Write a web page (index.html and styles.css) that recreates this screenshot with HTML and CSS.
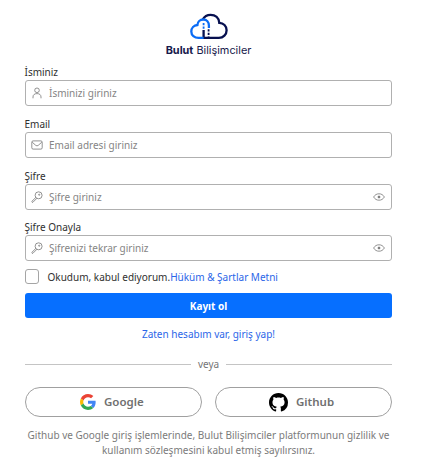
FILE: index.html
```html
<!DOCTYPE html>
<html lang="tr">
<head>
<meta charset="utf-8">
<title>Kayıt ol</title>
<link rel="stylesheet" href="styles.css">
</head>
<body>
<svg class="sprites" aria-hidden="true">
  <symbol id="key" viewBox="0 0 12 12"><circle cx="7.600" cy="4.300" r="3.500"/><circle cx="8.200" cy="3.700" r=".6"/><path d="M4.900 6.400 1 10.200a.7.700 0 0 0 1 1l3.900-3.900"/></symbol>
  <symbol id="eye" viewBox="0 0 12 8"><path d="M.6 4C2 1.800 3.700.8 6 .8s4 1 5.400 3.200C10 6.200 8.300 7.200 6 7.200S2 6.200.6 4z"/><circle cx="6" cy="4" r="1" class="pupil"/></symbol>
</svg>
<main class="page">
  <header class="brand">
    <svg class="brand-mark" viewBox="0 0 38 27">
      <g fill="none" stroke-width="2.300">
        <path stroke="#07104f" d="M12.700 6.500C14.400 3.400 17.200 1.800 20.600 1.800c4.800 0 8.300 3.100 8.700 8 4.200.1 7.300 3.300 7.300 7.400 0 4.300-3.300 7.700-7.700 7.700H13.600V17"/>
        <path stroke="#0b6cf5" d="M13.600 24.900H8.500c-4.100 0-7.200-2.700-7.200-6.400 0-3.700 2.700-6.300 6.100-6.500.2-3.300 2.700-5.500 5.900-5.500 3.400 0 5.600 2.500 5.600 6.100v2.400"/>
        <path stroke="#0b6cf5" stroke-width="1.800" stroke-dasharray="2.200 1.300" d="M13.600 10v6"/>
        <path stroke="#07104f" stroke-width="1.800" stroke-dasharray="2.200 1.300" d="M18.600 16.300v7.500"/>
      </g>
    </svg>
    <div class="brand-name"><b>Bulut</b> Bilişimciler</div>
  </header>
  <form class="form">
    <div class="field">
      <label for="name">İsminiz</label>
      <div class="control">
        <svg class="icon" viewBox="0 0 12 12"><circle cx="6" cy="3.300" r="2.300"/><path d="M2 11.300V10c0-2.200 1.500-3.400 4-3.400S10 7.800 10 10v1.300"/></svg>
        <input id="name" type="text" placeholder="İsminizi giriniz">
      </div>
    </div>
    <div class="field">
      <label for="email">Email</label>
      <div class="control">
        <svg class="icon" viewBox="0 0 12 12"><rect x=".8" y="1.900" width="10.400" height="8.200" rx="1.300"/><path d="m1.200 3.200 3.600 3.200q1.200.9 2.400 0l3.600-3.200"/></svg>
        <input id="email" type="text" placeholder="Email adresi giriniz">
      </div>
    </div>
    <div class="field">
      <label for="pass">Şifre</label>
      <div class="control">
        <svg class="icon"><use href="#key"/></svg>
        <input id="pass" type="password" placeholder="Şifre giriniz">
        <svg class="eye"><use href="#eye"/></svg>
      </div>
    </div>
    <div class="field">
      <label for="pass2">Şifre Onayla</label>
      <div class="control">
        <svg class="icon"><use href="#key"/></svg>
        <input id="pass2" type="password" placeholder="Şifrenizi tekrar giriniz">
        <svg class="eye"><use href="#eye"/></svg>
      </div>
    </div>
    <div class="terms"><input class="check" type="checkbox" id="ok"><label for="ok">Okudum, kabul ediyorum.</label><a class="terms-link">Hüküm &amp; Şartlar Metni</a></div>
    <button class="submit" type="button">Kayıt ol</button>
    <a class="login">Zaten hesabım var, giriş yap!</a>
    <div class="divider">veya</div>
    <div class="social">
      <button class="provider google" type="button">
        <svg viewBox="0 0 48 48"><path fill="#ea4335" d="M24 9.500c3.540 0 6.710 1.220 9.210 3.600l6.850-6.850C35.900 2.380 30.470 0 24 0 14.620 0 6.510 5.380 2.560 13.220l7.980 6.190C12.430 13.720 17.740 9.500 24 9.500z"/><path fill="#4285f4" d="M46.980 24.550c0-1.570-.15-3.090-.38-4.550H24v9.020h12.940c-.58 2.960-2.260 5.480-4.780 7.180l7.730 6c4.510-4.180 7.090-10.360 7.090-17.650z"/><path fill="#fbbc05" d="M10.530 28.590c-.48-1.450-.76-2.990-.76-4.590s.27-3.140.76-4.590l-7.980-6.190C.92 16.460 0 20.120 0 24c0 3.880.92 7.540 2.560 10.780z"/><path fill="#34a853" d="M24 48c6.480 0 11.930-2.130 15.890-5.810l-7.730-6c-2.150 1.450-4.920 2.300-8.160 2.300-6.260 0-11.570-4.220-13.470-9.910l-7.980 6.190C6.510 42.620 14.620 48 24 48z"/></svg>
        <span>Google</span>
      </button>
      <button class="provider github" type="button">
        <svg viewBox="0 0 16 16"><path d="M8 0C3.580 0 0 3.580 0 8c0 3.540 2.290 6.530 5.470 7.590.4.070.55-.17.55-.38 0-.19-.01-.82-.01-1.490-2.010.37-2.530-.49-2.690-.94-.09-.23-.48-.94-.82-1.130-.28-.15-.68-.52-.01-.53.63-.01 1.080.58 1.230.82.72 1.210 1.870.87 2.330.66.070-.52.28-.87.51-1.070-1.780-.2-3.640-.89-3.640-3.950 0-.87.31-1.590.82-2.150-.08-.2-.36-1.020.08-2.120 0 0 .67-.21 2.200.82.64-.18 1.320-.27 2-.27s1.360.09 2 .27c1.530-1.040 2.200-.82 2.200-.82.44 1.100.16 1.920.08 2.120.51.56.82 1.270.82 2.150 0 3.070-1.870 3.750-3.650 3.950.29.25.54.73.54 1.480 0 1.070-.01 1.930-.01 2.200 0 .21.15.46.55.38A8.010 8.010 0 0 0 16 8c0-4.420-3.580-8-8-8z"/></svg>
        <span>Github</span>
      </button>
    </div>
    <p class="note">Github ve Google giriş işlemlerinde, Bulut Bilişimciler platformunun gizlilik ve kullanım sözleşmesini kabul etmiş sayılırsınız.</p>
  </form>
</main>
</body>
</html>
```
FILE: styles.css
```css
* { box-sizing: border-box; }
body { margin: 0; background: #fff; color: #303030; font: 10px/14px "Noto Sans", sans-serif; }
.sprites { position: absolute; width: 0; height: 0; }
input, button { font: inherit; }
.page { width: 367px; margin-left: 25px; }
.brand { display: flex; flex-direction: column; align-items: center; padding-top: 13px; height: 65px; }
.brand-mark { width: 38px; height: 27px; }
.brand-name { margin-top: 3px; font: 10.9px/14px Inter, sans-serif; color: #17194c; white-space: nowrap; }
.form { display: flex; flex-direction: column; }
.field { height: 51.8px; }
.field label { display: block; height: 15px; margin-left: -0.5px; }
.control { display: flex; align-items: center; height: 26px; padding: 0 6px 0 5px; border: 1px solid #b0b0b0; border-radius: 3px; }
.icon { width: 12px; height: 12px; flex: none; fill: none; stroke: #777; stroke-width: .8; }
.eye { width: 12px; height: 8px; flex: none; fill: none; stroke: #777; stroke-width: .8; }
.pupil { fill: #666; }
.control input { flex: 1; min-width: 0; margin: 0 0 0 6px; padding: 0; border: 0; outline: 0; background: none; }
.control input::placeholder { color: #858585; opacity: 1; }
.terms { display: flex; align-items: center; height: 15px; margin-top: -3px; }
.check { appearance: none; width: 14px; height: 15px; margin: 0 8.500px 0 0; border: 1px solid #a5a5a5; border-radius: 3px; }
.terms-link, .login { color: #2b66e8; }
.submit { height: 25px; margin-top: 9px; border: 0; border-radius: 3px; background: #066fff; color: #fff; font-weight: 700; }
.login { margin-top: 9px; text-align: center; }
.divider { display: flex; align-items: center; gap: 7px; margin-top: 16px; color: #757575; }
.divider::before, .divider::after { content: ""; flex: 1; height: 1px; background: #c4c4c4; }
.social { display: grid; grid-template-columns: 1fr 1fr; gap: 13px; margin-top: 16px; }
.provider { display: flex; align-items: center; height: 30px; padding: 0 0 0 54px; border: 1px solid #a0a0a0; border-radius: 15px; background: #fff; color: #707070; font-size: 11.500px; font-weight: 600; }
.google svg { width: 16px; height: 16px; margin-right: 8px; }
.github { padding-left: 53px; }
.github svg { width: 19px; height: 19px; margin-right: 8px; }
.note { margin: 11px 0 0; color: #7b7b7b; text-align: center; line-height: 14.500px; }
```
